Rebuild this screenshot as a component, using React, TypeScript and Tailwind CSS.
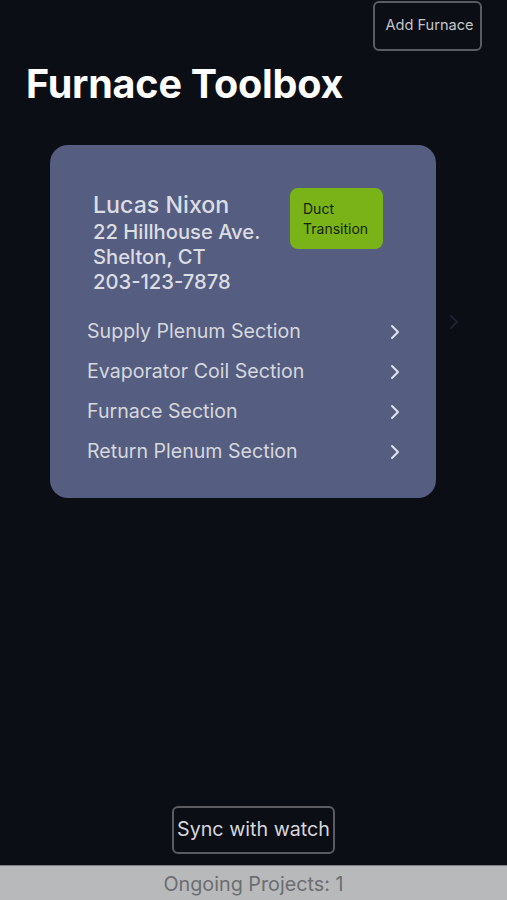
import React from 'react';

const sections = ['Supply Plenum Section', 'Evaporator Coil Section', 'Furnace Section', 'Return Plenum Section'];

function Chevron({ className }: { className?: string }) {
  return (
    <svg width="10" height="16" viewBox="0 0 10 16" className={className} fill="none">
      <path d="M2 2l6 6-6 6" stroke="currentColor" strokeWidth="2" strokeLinecap="round" strokeLinejoin="round" />
    </svg>
  );
}

export default function App() {
  return (
    <div
      className="w-[507px] h-[900px] bg-[#0b0e15] flex flex-col overflow-hidden"
      style={{ fontFamily: 'Inter, "Liberation Sans", sans-serif' }}
    >
      <div className="flex justify-end pr-[25px] pt-[1px]">
        <button className="w-[109px] h-[50px] border-2 border-[#5a5c62] rounded-[6px] text-[14.6px] text-[#c4c5c9] pl-[4px]">
          Add Furnace
        </button>
      </div>

      <h1 className="ml-[26px] mt-[10px] text-[39.5px] font-bold text-white leading-[46px] tracking-[-0.2px]">
        Furnace Toolbox
      </h1>

      <div className="relative mt-[38px]">
        <div className="ml-[50px] w-[386px] h-[353px] bg-[#555d80] rounded-[18px] flex flex-col">
          <div className="flex justify-between pl-[43px] pr-[53px] pt-[46px]">
            <div className="flex flex-col text-[#dcdde3]">
              <div className="text-[23.2px] leading-[28px] font-medium">Lucas Nixon</div>
              <div className="text-[20.2px] leading-[25px] font-medium">22 Hillhouse Ave.</div>
              <div className="text-[20.2px] leading-[25px] font-medium">Shelton, CT</div>
              <div className="text-[20.2px] leading-[25px] font-medium">203-123-7878</div>
            </div>
            <div className="w-[93px] h-[61px] bg-[#7ab317] rounded-[8px] flex flex-col justify-center pl-[13px] text-[14px] leading-[20px] text-[#142400] mt-[-3px]">
              <span>Duct</span>
              <span>Transition</span>
            </div>
          </div>
          <div className="flex flex-col pl-[37px] pr-[36px] mt-[18px]">
            {sections.map((s) => (
              <div key={s} className="h-[40px] flex items-center justify-between text-[19.6px] text-[#d6d8de]">
                <span>{s}</span>
                <Chevron className="text-[#e2e3e8]" />
              </div>
            ))}
          </div>
        </div>
        <Chevron className="absolute left-[449px] top-[169px] text-[#1e2230]" />
      </div>

      <div className="flex-1" />

      <div className="flex justify-center mb-[11px]">
        <button className="w-[163px] h-[48px] border-2 border-[#5a5c62] rounded-[6px] text-[19.7px] text-[#d6d7db]">
          Sync with watch
        </button>
      </div>

      <div className="h-[35px] bg-[#b8b9bb] border-t border-[#7d7e82] flex items-center justify-center text-[19.8px] text-[#6c6d70] pt-[3px]">
        Ongoing Projects: 1
      </div>
    </div>
  );
}
